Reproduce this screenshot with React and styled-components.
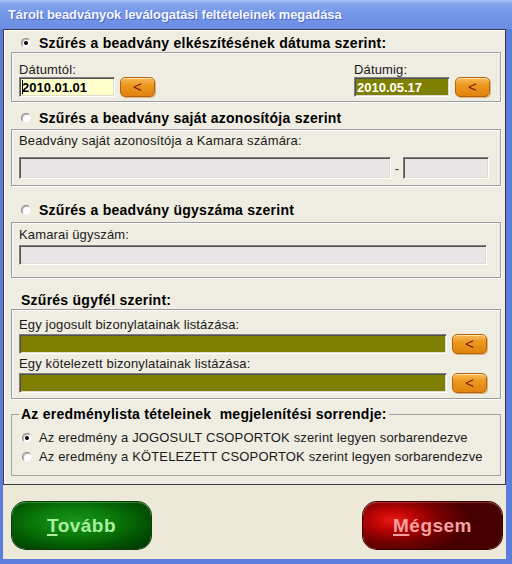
import React from "react";
import styled, { createGlobalStyle, css } from "styled-components";

const GlobalStyle = createGlobalStyle`
  html, body {
    margin: 0;
    padding: 0;
    background: #ece9d8;
    overflow: hidden;
  }

  * {
    box-sizing: border-box;
  }
`;

const FONT = `"Liberation Sans", Arial, sans-serif`;

export default function App() {
  return (
    <>
      <GlobalStyle />
      <Window>
        <TitleBar>
          <TitleText>Tárolt beadványok leválogatási feltételeinek megadása</TitleText>
        </TitleBar>

        <Client>
          <Panel>
            {/* dátum szerinti szűrés */}
            <Heading $mt={3}>
              <Radio $checked />
              Szűrés a beadvány elkészítésének dátuma szerint:
            </Heading>

            <GroupBox $mt={-1} $pad="9px 10px 4px 7px">
              <DateRow>
                <Field>
                  <Label>Dátumtól:</Label>
                  <InputRow $gap={5}>
                    <TextBox $width={96} $bg="#ffffcc" $bold>
                      <Caret />
                      2010.01.01
                    </TextBox>
                    <PickButton type="button">&lt;</PickButton>
                  </InputRow>
                </Field>

                <Field>
                  <Label>Dátumig:</Label>
                  <InputRow $gap={5}>
                    <TextBox $width={96} $bg="#808000" $color="#ffffff" $bold>
                      2010.05.17
                    </TextBox>
                    <PickButton type="button">&lt;</PickButton>
                  </InputRow>
                </Field>
              </DateRow>
            </GroupBox>

            {/* saját azonosító */}
            <Heading $mt={6}>
              <Radio />
              Szűrés a beadvány saját azonosítója szerint
            </Heading>

            <GroupBox $mt={1} $pad="3px 11px 6px 7px">
              <Label>Beadvány saját azonosítója a Kamara számára:</Label>
              <InputRow $gap={0} $mt={9}>
                <TextBox $height={22} $bg="#e7e5e6" />
                <Dash>-</Dash>
                <TextBox $width={86} $height={22} $bg="#e7e5e6" />
              </InputRow>
            </GroupBox>

            {/* ügyszám */}
            <Heading $mt={14}>
              <Radio />
              Szűrés a beadvány ügyszáma szerint
            </Heading>

            <GroupBox $mt={2} $pad="4px 13px 12px 7px">
              <Label>Kamarai ügyszám:</Label>
              <InputRow $mt={3}>
                <TextBox $bg="#e7e5e6" />
              </InputRow>
            </GroupBox>

            {/* ügyfél */}
            <Heading $mt={12}>Szűrés ügyfél szerint:</Heading>

            <GroupBox $mt={-1} $pad="7px 13px 5px 7px">
              <Label>Egy jogosult bizonylatainak listázása:</Label>
              <InputRow $gap={5} $mt={2}>
                <TextBox $bg="#808000" />
                <PickButton type="button">&lt;</PickButton>
              </InputRow>

              <Label $mt={2}>Egy kötelezett bizonylatainak listázása:</Label>
              <InputRow $gap={5} $mt={2}>
                <TextBox $bg="#808000" />
                <PickButton type="button">&lt;</PickButton>
              </InputRow>
            </GroupBox>

            {/* sorrend */}
            <OrderSet>
              <Legend>Az eredménylista tételeinek  megjelenítési sorrendje:</Legend>

              <OptionRow $mt={6}>
                <Radio $checked />
                Az eredmény a JOGOSULT CSOPORTOK szerint legyen sorbarendezve
              </OptionRow>
              <OptionRow>
                <Radio />
                Az eredmény a KÖTELEZETT CSOPORTOK szerint legyen sorbarendezve
              </OptionRow>
            </OrderSet>
          </Panel>

          <ButtonBar>
            <BigButton type="button" $tone="ok">
              <u>T</u>ovább
            </BigButton>
            <BigButton type="button" $tone="cancel">
              <u>M</u>égsem
            </BigButton>
          </ButtonBar>
        </Client>
      </Window>
    </>
  );
}

// =========================================================
// ablak keret
// =========================================================

const Window = styled.div`
  display: flex;
  flex-direction: column;

  width: 512px;
  height: 564px;

  background: #5b7edc;
`;

const TitleBar = styled.div`
  display: flex;
  align-items: center;

  height: 29px;
  padding: 0 0 1px 8px;

  flex-shrink: 0;

  background: linear-gradient(
    to bottom,
    #a9c2f4 0%,
    #86a6ec 12%,
    #7698e8 40%,
    #6f92e6 75%,
    #6a8ee4 100%
  );
`;

const TitleText = styled.span`
  font-family: ${FONT};
  font-size: 13px;
  font-weight: 700;
  letter-spacing: -0.1px;
  color: #f4f7ff;

  text-shadow: 1px 1px 0 #4a68c4;
  white-space: nowrap;
`;

const Client = styled.div`
  display: flex;
  flex-direction: column;

  flex: 1;
  margin: 0 6px 5px 3px;

  background: #ece9d8;
`;

const Panel = styled.div`
  display: flex;
  flex-direction: column;

  height: 456px;
  padding: 0 4px 0 7px;

  flex-shrink: 0;

  border: 1px solid #3a3a3a;
  box-shadow: inset 1px 1px 0 #ffffff;

  background: #efece1;
`;

// =========================================================
// szakaszok
// =========================================================

const Heading = styled.div`
  display: flex;
  align-items: center;
  gap: 8px;

  height: 20px;
  margin-top: ${(p) => p.$mt || 0}px;
  padding-left: 10px;

  font-family: ${FONT};
  font-size: 14px;
  font-weight: 700;
  letter-spacing: 0.25px;
  color: #000000;

  white-space: nowrap;
`;

const GroupBox = styled.div`
  display: flex;
  flex-direction: column;

  margin-top: ${(p) => p.$mt || 0}px;
  padding: ${(p) => p.$pad};

  border: 1px solid #9c9c9c;
  box-shadow: 1px 1px 0 #ffffff, inset 1px 1px 0 #ffffff;
`;

const DateRow = styled.div`
  display: flex;
  justify-content: space-between;
`;

const Field = styled.div`
  display: flex;
  flex-direction: column;
`;

const Label = styled.div`
  height: 15px;
  margin-top: ${(p) => p.$mt || 0}px;

  font-family: ${FONT};
  font-size: 13px;
  line-height: 15px;
  letter-spacing: 0.15px;
  color: #1a1a1a;

  white-space: nowrap;
`;

const InputRow = styled.div`
  display: flex;
  align-items: center;
  gap: ${(p) => p.$gap || 0}px;

  margin-top: ${(p) => p.$mt || 0}px;
`;

const TextBox = styled.div`
  display: flex;
  align-items: center;

  width: ${(p) => (p.$width ? `${p.$width}px` : "auto")};
  height: ${(p) => p.$height || 20}px;
  padding-left: 2px;

  flex: ${(p) => (p.$width ? "none" : 1)};

  border: 1px solid;
  border-color: #7f7f7f #ffffff #ffffff #7f7f7f;
  box-shadow: inset 1px 1px 0 #505050, inset -1px -1px 0 #dedbd0;

  background: ${(p) => p.$bg};

  font-family: ${FONT};
  font-size: 13px;
  font-weight: ${(p) => (p.$bold ? 700 : 400)};
  color: ${(p) => p.$color || "#000000"};

  white-space: nowrap;
`;

const Caret = styled.span`
  width: 1px;
  height: 14px;
  margin-right: -1px;

  background: #000000;
`;

const Dash = styled.span`
  width: 12px;

  font-family: ${FONT};
  font-size: 13px;
  text-align: center;
  color: #333333;
`;

const PickButton = styled.button`
  width: 35px;
  height: 20px;
  padding: 0 0 2px;

  flex-shrink: 0;

  border: 1px solid #b5630a;
  border-radius: 5px;

  background: linear-gradient(to bottom, #f7bb5c 0%, #ec981f 40%, #e0830f 100%);
  box-shadow: inset 0 1px 0 rgba(255, 235, 180, 0.8), 1px 1px 0 #d8b48a;

  font-family: ${FONT};
  font-size: 15px;
  line-height: 15px;
  color: #7a1400;

  cursor: pointer;
`;

const Radio = styled.span`
  position: relative;

  width: 10px;
  height: 10px;

  flex-shrink: 0;

  border: 1px solid;
  border-color: #8a8a8a #f4f4f4 #f4f4f4 #8a8a8a;
  border-radius: 50%;

  background: #ffffff;
  box-shadow: inset 1px 1px 0 #b8b8b8;

  ${(p) =>
    p.$checked &&
    css`
      &::after {
        content: "";

        position: absolute;
        top: 2px;
        left: 2px;

        width: 4px;
        height: 4px;

        border-radius: 50%;

        background: #000000;
      }
    `}
`;

const OrderSet = styled.fieldset`
  margin: 7px 0 0;
  padding: 0 0 9px 7px;

  border: 1px solid #a3a3a3;
`;

const Legend = styled.legend`
  padding: 0 2px;

  font-family: ${FONT};
  font-size: 14px;
  font-weight: 700;
  line-height: 16px;
  letter-spacing: 0.25px;
  color: #000000;

  white-space: pre;
`;

const OptionRow = styled.div`
  display: flex;
  align-items: center;
  gap: 7px;

  height: 19px;
  margin-top: ${(p) => p.$mt || 0}px;
  padding-left: 3px;

  font-family: ${FONT};
  font-size: 13px;
  letter-spacing: 0.15px;
  color: #1a1a1a;

  white-space: nowrap;
`;

// =========================================================
// gombok
// =========================================================

const ButtonBar = styled.div`
  display: flex;
  justify-content: space-between;
  align-items: flex-start;

  flex: 1;
  padding: 17px 4px 0 9px;
`;

const BigButton = styled.button`
  width: 139px;
  height: 47px;
  padding: 0;

  border: none;
  border-radius: 14px;

  font-family: ${FONT};
  font-size: 19px;
  font-weight: 700;
  letter-spacing: 0.5px;

  cursor: pointer;

  ${(p) =>
    p.$tone === "ok"
      ? css`
          color: #a8f0a0;
          background: radial-gradient(
            ellipse 70% 75% at 45% 42%,
            #1b961b 0%,
            #0b7a0b 40%,
            #025402 75%,
            #013a01 100%
          );
          box-shadow: inset 0 1px 1px rgba(120, 220, 120, 0.35), 0 0 0 1px #0b3a0b;
        `
      : css`
          color: #f3a0a0;
          background: radial-gradient(
            ellipse 55% 75% at 22% 38%,
            #f01616 0%,
            #b80404 30%,
            #780000 62%,
            #470000 100%
          );
          box-shadow: inset 0 1px 1px rgba(255, 140, 140, 0.3), 0 0 0 1px #3a0000;
        `}

  u {
    text-decoration-thickness: 2px;
    text-underline-offset: 2px;
  }
`;
